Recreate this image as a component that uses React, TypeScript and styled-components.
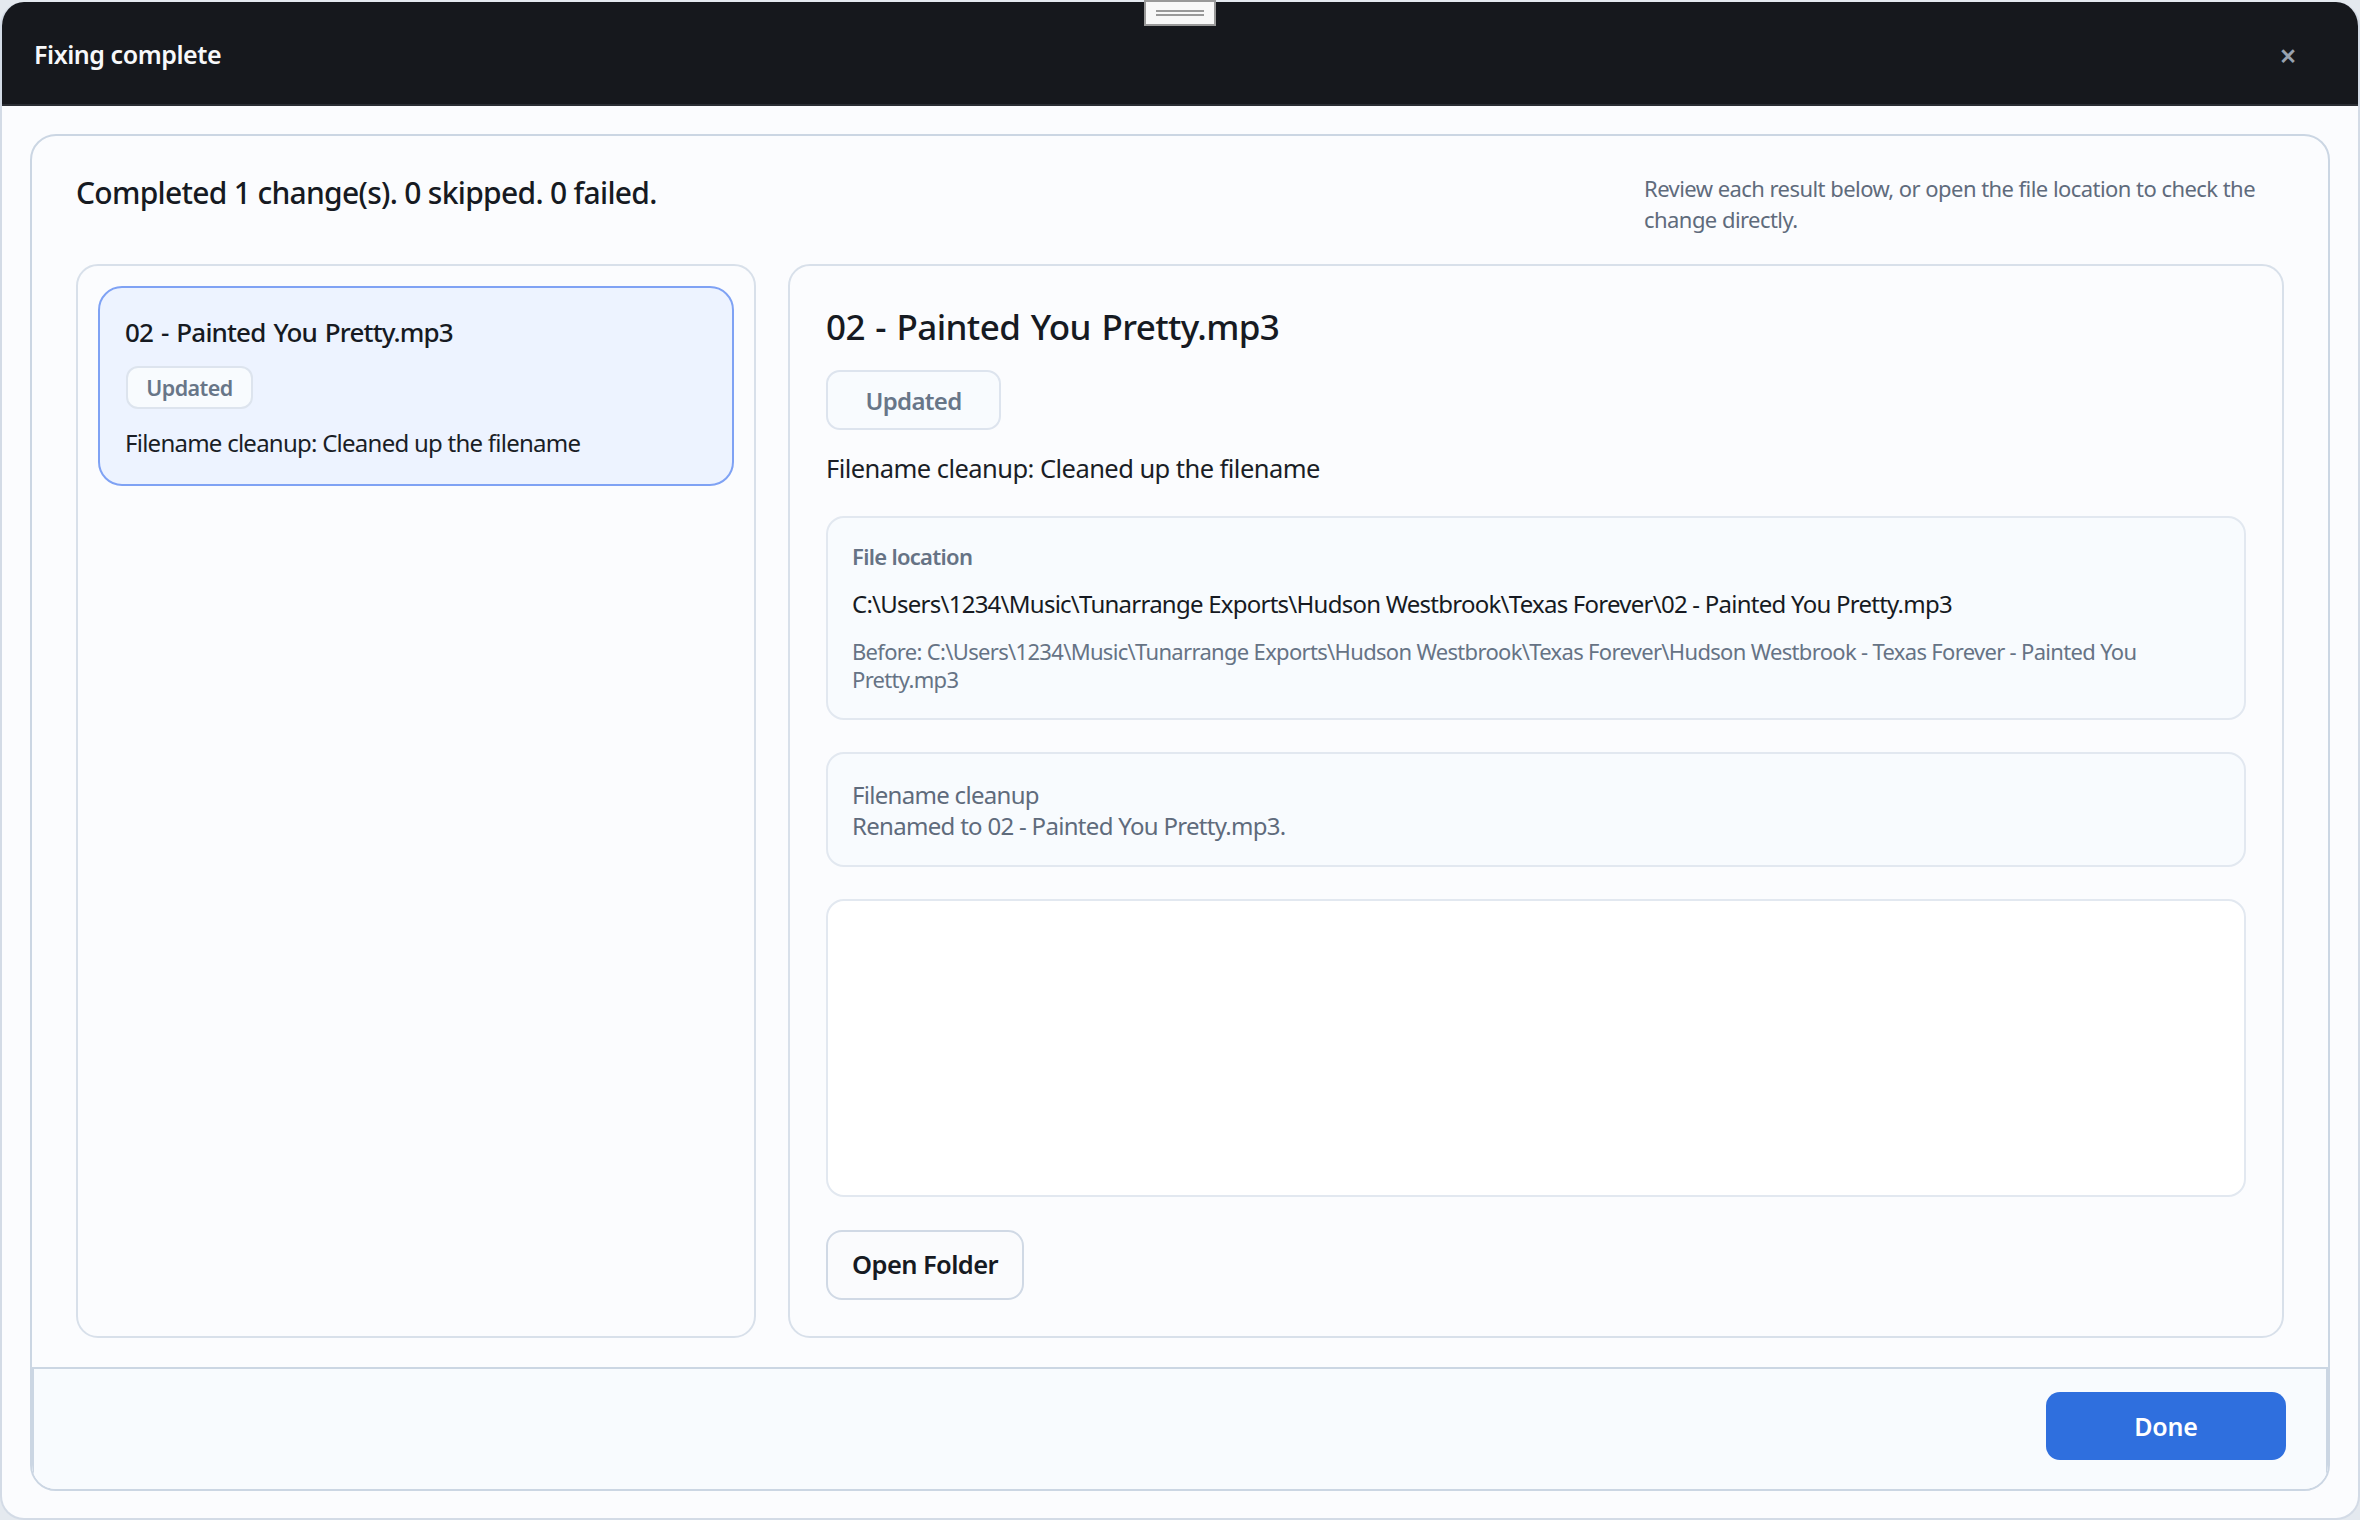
import React from "react";
import styled, { createGlobalStyle } from "styled-components";

const Global = createGlobalStyle`
  html, body { margin: 0; padding: 0; background: #e4e9ef; }
  * { box-sizing: border-box; }
  #root { width: 2360px; height: 1520px; }
`;

const font = `"Noto Sans", "Open Sans", sans-serif`;

const Frame = styled.div`
  position: relative;
  width: 2360px;
  height: 1520px;
  padding: 2px 0 0 0;
  font-family: ${font};
  color: #161a22;
`;

const Window = styled.div`
  width: 100%;
  height: 1518px;
  background: #fbfcfe;
  border: 2px solid #d3dbe6;
  border-top: 0;
  border-radius: 24px;
  overflow: hidden;
  display: flex;
  flex-direction: column;
`;

const TitleBar = styled.header`
  flex: 0 0 104px;
  background: #16181d;
  border-bottom: 2px solid #2b2e34;
  display: flex;
  align-items: center;
  justify-content: space-between;
  padding: 0 55px 0 32px;
`;

const WindowTitle = styled.h1`
  margin: 1px 0 0;
  font-size: 25px;
  font-weight: 600;
  letter-spacing: -0.45px;
  color: #f7f8fa;
`;

const CloseButton = styled.button`
  border: 0;
  background: none;
  padding: 0;
  width: 30px;
  height: 30px;
  color: #98a2b0;
  font: 600 30px/30px ${font};
  margin-top: 6px;
`;

const DragHandle = styled.div`
  position: absolute;
  top: 0;
  left: 1144px;
  width: 72px;
  height: 26px;
  background: #f8f8f8;
  border: 2px solid #999;
  display: flex;
  flex-direction: column;
  align-items: center;
  gap: 2px;
  padding-top: 8px;
`;

const GripLine = styled.span`
  width: 48px;
  height: 2px;
  background: #999;
`;

const Body = styled.main`
  flex: 1;
  min-height: 0;
  padding: 28px 28px 27px 28px;
  display: flex;
`;

const Card = styled.section`
  flex: 1;
  border: 2px solid #cbd6e3;
  border-radius: 26px;
  display: flex;
  flex-direction: column;
  overflow: hidden;
`;

const Content = styled.div`
  flex: 1;
  min-height: 0;
  padding: 0 44px 29px;
  display: flex;
  flex-direction: column;
`;

const SummaryRow = styled.div`
  flex: 0 0 128px;
  display: flex;
  justify-content: space-between;
  padding-top: 37px;
`;

const Summary = styled.div`
  font-size: 30px;
  line-height: 40px;
  font-weight: 500;
  letter-spacing: -0.7px;
  color: #161a22;
`;

const Hint = styled.p`
  margin: 0;
  width: 640px;
  font-size: 22px;
  line-height: 31px;
  letter-spacing: -0.55px;
  color: #5f6b7c;
`;

const Columns = styled.div`
  flex: 1;
  min-height: 0;
  display: grid;
  grid-template-columns: 680px 1fr;
  gap: 32px;
`;

const Panel = styled.div`
  border: 2px solid #d8e0ea;
  border-radius: 22px;
  display: flex;
  flex-direction: column;
`;

const ListPanel = styled(Panel)`
  padding: 20px;
`;

const DetailPanel = styled(Panel)`
  padding: 0 36px;
`;

const ResultItem = styled.div`
  height: 200px;
  background: #edf3ff;
  border: 2px solid #7fa2f4;
  border-radius: 24px;
  padding: 26px 25px 0;
`;

const ItemTitle = styled.div`
  font-size: 26px;
  line-height: 36px;
  font-weight: 500;
  letter-spacing: -0.85px;
  word-spacing: 2px;
`;

const Badge = styled.div<{ $large?: boolean }>`
  display: flex;
  align-items: center;
  justify-content: center;
  width: ${(p) => (p.$large ? 175 : 127)}px;
  height: ${(p) => (p.$large ? 60 : 43)}px;
  margin-left: 1px;
  border: 2px solid #dde4ee;
  border-radius: ${(p) => (p.$large ? 14 : 12)}px;
  background: #f8fbfe;
  color: #687688;
  font-size: ${(p) => (p.$large ? 24 : 21.5)}px;
  font-weight: 600;
  letter-spacing: ${(p) => (p.$large ? -0.7 : -0.55)}px;
`;

const ItemBadge = styled(Badge)`
  margin-top: 16px;
`;

const ItemText = styled.div`
  margin-top: 18px;
  font-size: 24px;
  line-height: 32px;
  letter-spacing: -0.75px;
  color: #1a1e26;
`;

const DetailTitle = styled.h2`
  margin: 38px 0 0;
  font-size: 35px;
  line-height: 46px;
  font-weight: 500;
  letter-spacing: -0.6px;
  word-spacing: 2px;
  color: #161a22;
`;

const DetailBadge = styled(Badge)`
  margin: 20px 0 0;
`;

const DetailText = styled.div`
  margin-top: 20px;
  font-size: 25.5px;
  line-height: 36px;
  letter-spacing: -0.55px;
  color: #1a1e26;
`;

const InfoBox = styled.div`
  background: #f8fbfe;
  border: 2px solid #e2e8f0;
  border-radius: 18px;
  padding: 24px 24px 0;
`;

const LocationBox = styled(InfoBox)`
  height: 204px;
  margin-top: 30px;
`;

const CleanupBox = styled(InfoBox)`
  height: 115px;
  margin-top: 32px;
  padding-top: 25px;
  color: #5f6b7c;
  font-size: 24px;
  line-height: 31px;
  letter-spacing: -0.7px;
`;

const BoxLabel = styled.div`
  font-size: 22px;
  line-height: 28px;
  font-weight: 600;
  letter-spacing: -0.7px;
  color: #667385;
`;

const PathLine = styled.div`
  margin-top: 18px;
  font-size: 24px;
  line-height: 32px;
  letter-spacing: -0.75px;
  color: #161a22;
`;

const BeforeLine = styled.div`
  margin-top: 17px;
  font-size: 22px;
  line-height: 28px;
  letter-spacing: -0.68px;
  color: #667385;
`;

const PreviewBox = styled.div`
  flex: 0 0 298px;
  margin-top: 32px;
  background: #fff;
  border: 2px solid #e2e8f0;
  border-radius: 18px;
`;

const FolderButton = styled.button`
  align-self: flex-start;
  margin-top: 33px;
  width: 198px;
  height: 70px;
  border: 2px solid #d0d9e5;
  border-radius: 16px;
  background: #fafbfd;
  color: #161a22;
  font: 600 25.5px/1 ${font};
  letter-spacing: -0.6px;
`;

const Footer = styled.footer`
  flex: 0 0 122px;
  background: #f8fbfe;
  border-top: 2px solid #cbd6e3;
  border-left: 2px solid #cbd6e3;
  border-right: 2px solid #cbd6e3;
  display: flex;
  justify-content: flex-end;
  padding: 23px 40px 0 0;
`;

const DoneButton = styled.button`
  width: 240px;
  height: 68px;
  border: 0;
  border-radius: 14px;
  background: #2f6fde;
  color: #fff;
  font: 600 25px/1 ${font};
  letter-spacing: -0.2px;
`;

export default function App() {
  return (
    <Frame>
      <Global />
      <Window>
        <TitleBar>
          <WindowTitle>Fixing complete</WindowTitle>
          <CloseButton>×</CloseButton>
        </TitleBar>
        <Body>
          <Card>
            <Content>
              <SummaryRow>
                <Summary>Completed 1 change(s). 0 skipped. 0 failed.</Summary>
                <Hint>Review each result below, or open the file location to check the change directly.</Hint>
              </SummaryRow>
              <Columns>
                <ListPanel>
                  <ResultItem>
                    <ItemTitle>02 - Painted You Pretty.mp3</ItemTitle>
                    <ItemBadge>Updated</ItemBadge>
                    <ItemText>Filename cleanup: Cleaned up the filename</ItemText>
                  </ResultItem>
                </ListPanel>
                <DetailPanel>
                  <DetailTitle>02 - Painted You Pretty.mp3</DetailTitle>
                  <DetailBadge $large>Updated</DetailBadge>
                  <DetailText>Filename cleanup: Cleaned up the filename</DetailText>
                  <LocationBox>
                    <BoxLabel>File location</BoxLabel>
                    <PathLine>C:\Users\1234\Music\Tunarrange Exports\Hudson Westbrook\Texas Forever\02 - Painted You Pretty.mp3</PathLine>
                    <BeforeLine>Before: C:\Users\1234\Music\Tunarrange Exports\Hudson Westbrook\Texas Forever\Hudson Westbrook - Texas Forever - Painted You Pretty.mp3</BeforeLine>
                  </LocationBox>
                  <CleanupBox>
                    Filename cleanup
                    <br />
                    Renamed to 02 - Painted You Pretty.mp3.
                  </CleanupBox>
                  <PreviewBox />
                  <FolderButton>Open Folder</FolderButton>
                </DetailPanel>
              </Columns>
            </Content>
            <Footer>
              <DoneButton>Done</DoneButton>
            </Footer>
          </Card>
        </Body>
      </Window>
      <DragHandle>
        <GripLine />
        <GripLine />
      </DragHandle>
    </Frame>
  );
}
